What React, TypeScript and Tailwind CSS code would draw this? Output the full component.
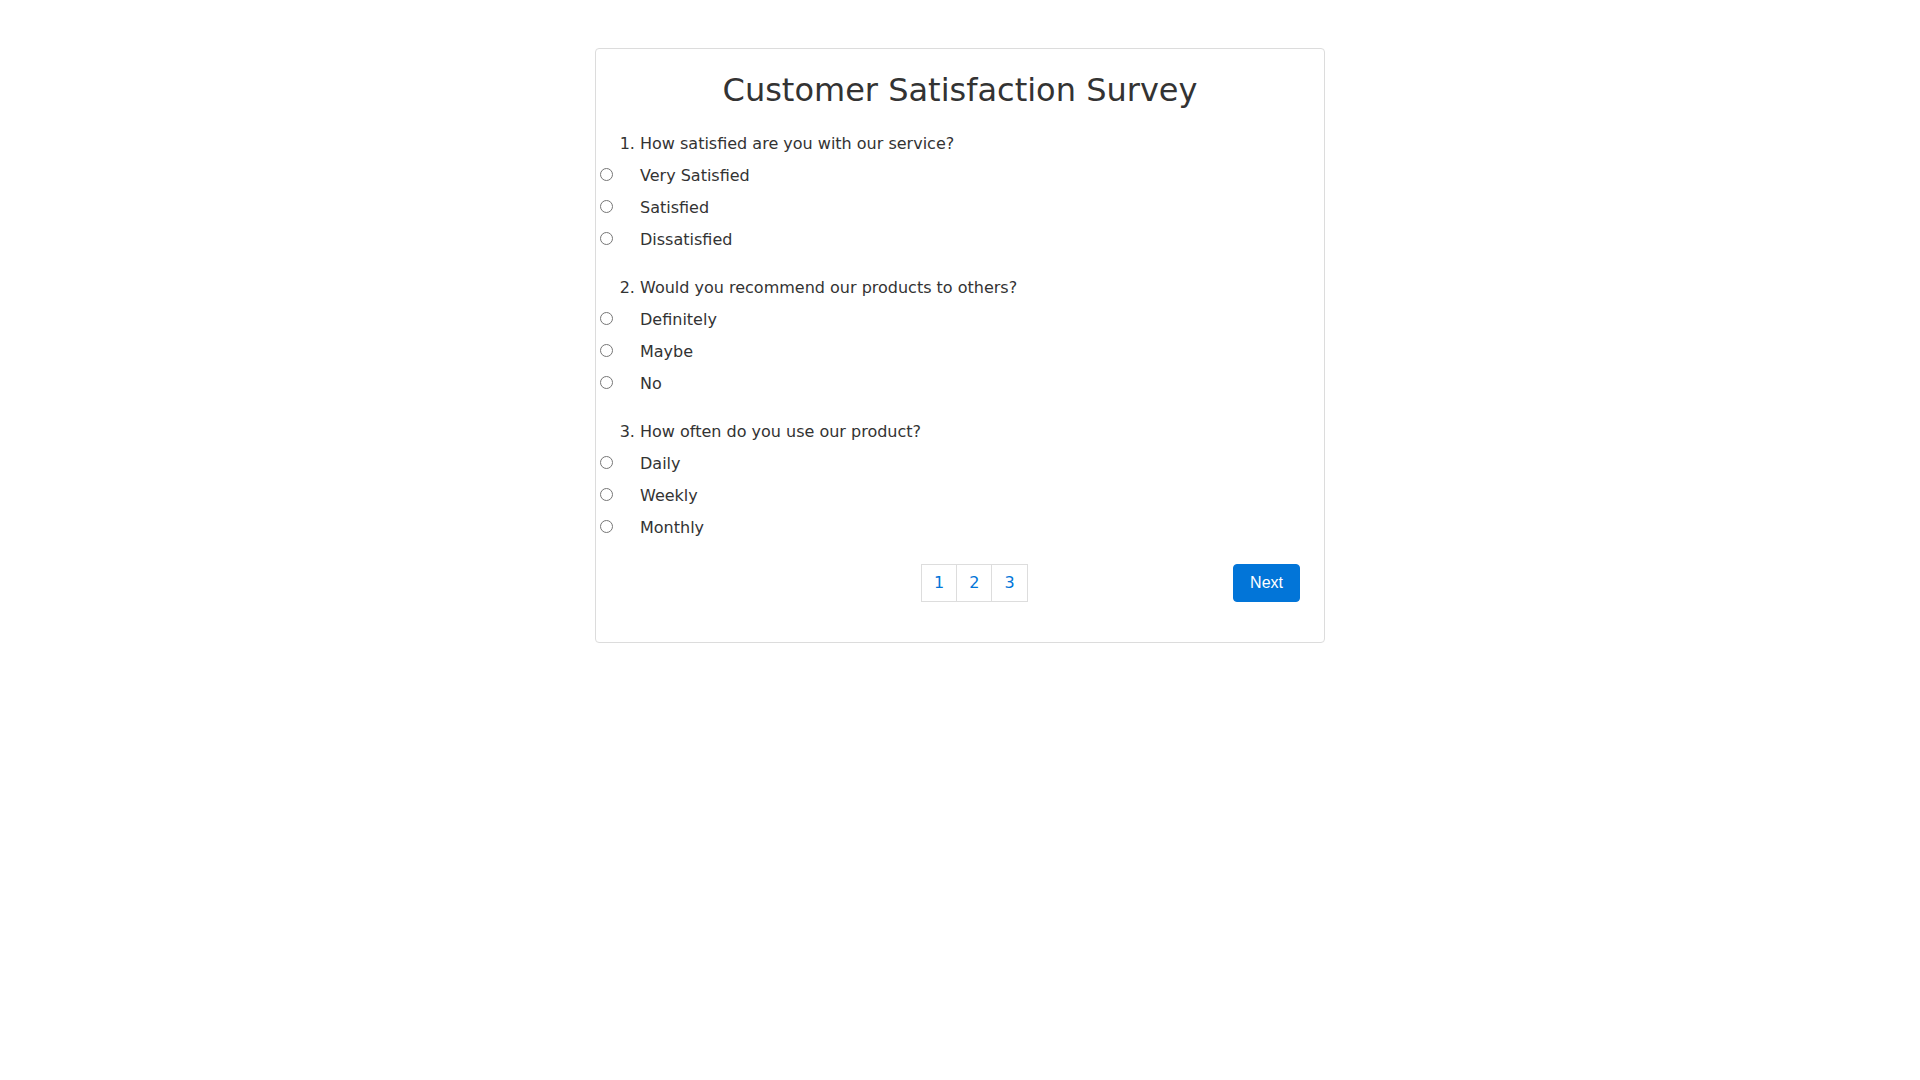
import React from "react";

const questions = [
  { q: "How satisfied are you with our service?", name: "q1", options: ["Very Satisfied", "Satisfied", "Dissatisfied"] },
  { q: "Would you recommend our products to others?", name: "q2", options: ["Definitely", "Maybe", "No"] },
  { q: "How often do you use our product?", name: "q3", options: ["Daily", "Weekly", "Monthly"] },
];

export default function App() {
  return (
    <div className="min-h-screen w-full bg-white pt-[48px]" style={{ fontFamily: '"DejaVu Sans", sans-serif' }}>
      <div className="mx-auto w-[730px] rounded-[4px] border border-[#dcdcdc] pt-[22px] pb-[40px] text-[#333333]">
        <h2 className="text-center text-[32px] leading-[38.4px] font-normal text-[#333333]">
          Customer Satisfaction Survey
        </h2>
        <ol className="mt-[23px] list-decimal pl-[44px] text-[16px] leading-[24px]">
          {questions.map((item) => (
            <li key={item.name} className="mb-[24px]">
              <div className="h-[24px]">{item.q}</div>
              <div className="-ml-[40px]">
                {item.options.map((opt) => (
                  <label key={opt} className="mt-[8px] flex h-[24px] items-center">
                    <input type="radio" name={item.name} className="m-0 mb-[4px] h-[13px] w-[13px] shrink-0" />
                    <span className="ml-[27px]">{opt}</span>
                  </label>
                ))}
              </div>
            </li>
          ))}
        </ol>
        <div className="flex items-center pl-[325px] pr-[24px]">
          <div className="flex">
            {["1", "2", "3"].map((n, i) => (
              <a
                key={n}
                href="#"
                className={`block border border-[#dddddd] px-3 py-2 text-[16px] leading-[20px] text-[#0275d8] ${i > 0 ? "-ml-px" : ""}`}
              >
                {n}
              </a>
            ))}
          </div>
          <button
            className="ml-auto flex h-[38px] items-center rounded-[4px] border border-[#0275d8] bg-[#0275d8] px-4 text-[16px] text-white"
            style={{ fontFamily: '"Liberation Sans", Arial, sans-serif' }}
          >
            Next
          </button>
        </div>
      </div>
    </div>
  );
}
